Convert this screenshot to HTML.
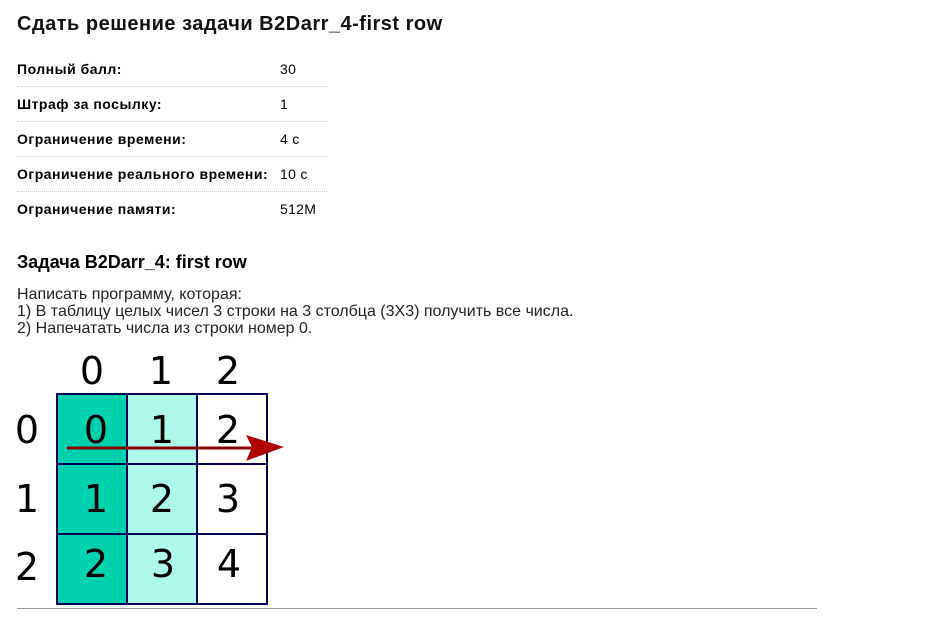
<!DOCTYPE html>
<html><head><meta charset="utf-8"><style>
body{margin:0;background:#fff;font-family:"Liberation Sans",Arial,sans-serif;color:#000;width:934px;height:623px;overflow:hidden;position:relative}
.a{position:absolute;white-space:nowrap}
h1{position:absolute;left:17px;top:13px;margin:0;font-size:20px;letter-spacing:0.5px;font-weight:bold;color:#111}
.row{position:absolute;left:17px;width:310px;height:35px;border-bottom:1px dotted #ccc;font-size:14px}
.row b{position:absolute;left:0;top:10px;letter-spacing:0.5px}
.row span{position:absolute;left:263px;top:10px;letter-spacing:0.3px}
</style></head><body>
<h1>Сдать решение задачи B2Darr_4-first row</h1>
<div class="row" style="top:51px"><b>Полный балл:</b><span>30</span></div>
<div class="row" style="top:86px"><b>Штраф за посылку:</b><span>1</span></div>
<div class="row" style="top:121px"><b>Ограничение времени:</b><span>4 с</span></div>
<div class="row" style="top:156px"><b>Ограничение реального времени:</b><span>10 с</span></div>
<div class="row" style="top:191px;border-bottom:none"><b>Ограничение памяти:</b><span>512M</span></div>
<div class="a" style="left:17px;top:252px;font-size:18px;font-weight:bold">Задача B2Darr_4: first row</div>
<div class="a" style="left:17px;top:286px;font-size:16px;line-height:17px;color:#222">Написать программу, которая:<br>1) В таблицу целых чисел 3 строки на 3 столбца (3Х3) получить все числа.<br>2) Напечатать числа из строки номер 0.</div>
<svg class="a" style="left:0;top:340px" width="320" height="283">
<rect x="57" y="54" width="70" height="210" fill="#00d2b0"/>
<rect x="127" y="54" width="70" height="210" fill="#adfaea"/>
<g stroke="#000055" stroke-width="2" fill="none">
<rect x="57" y="54" width="210" height="210"/>
<line x1="127" y1="54" x2="127" y2="264"/><line x1="197" y1="54" x2="197" y2="264"/>
<line x1="57" y1="124" x2="267" y2="124"/><line x1="57" y1="194" x2="267" y2="194"/>
</g>
<g font-family="DejaVu Sans, sans-serif" font-size="38" text-anchor="middle">
<text x="92" y="44">0</text><text x="161" y="44">1</text><text x="228" y="44">2</text>
<text x="27" y="103">0</text><text x="27" y="172">1</text><text x="27" y="240">2</text>
<text x="96" y="103">0</text><text x="162" y="103">1</text><text x="228" y="103">2</text>
<text x="96" y="172">1</text><text x="162" y="172">2</text><text x="228" y="172">3</text>
<text x="96" y="237">2</text><text x="163" y="237">3</text><text x="229" y="237">4</text>
</g>
<line x1="67" y1="108" x2="252" y2="108" stroke="#8b0000" stroke-width="3"/>
<path d="M246 95 L284 107 L246 121 L252 107 Z" fill="#b00000"/>
</svg>
<div class="a" style="left:17px;top:608px;width:800px;border-top:1px solid #999"></div>
</body></html>
